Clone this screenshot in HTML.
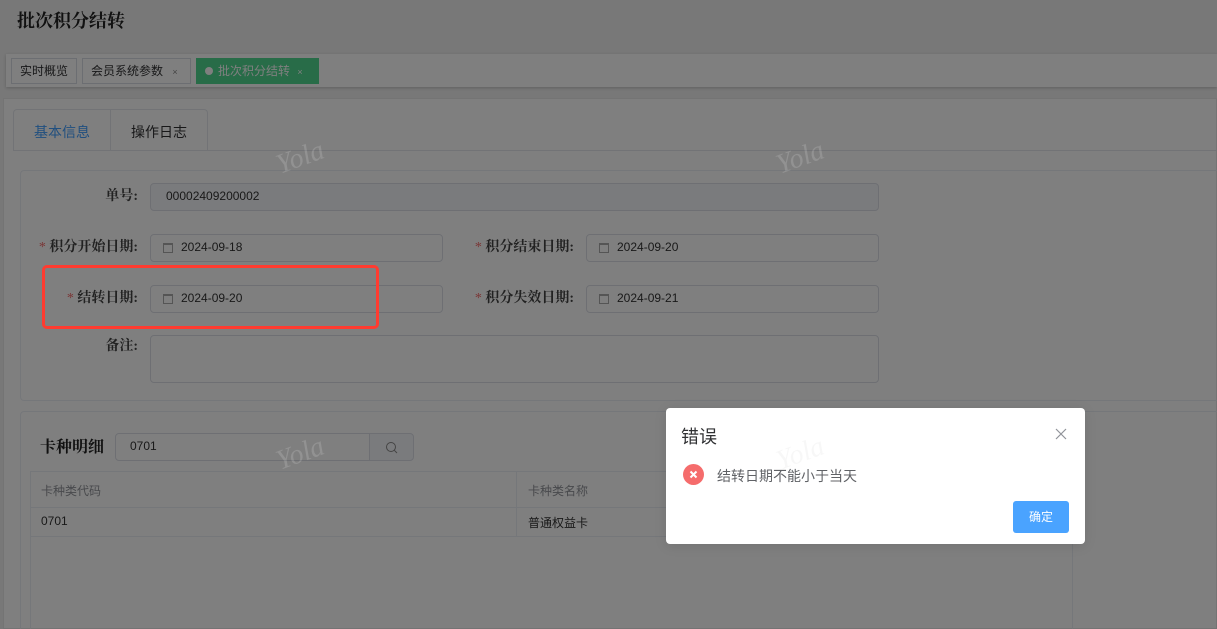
<!DOCTYPE html>
<html><head><meta charset="utf-8"><style>
*{box-sizing:border-box;margin:0;padding:0}
body{width:1217px;height:629px;overflow:hidden;position:relative;background:#fff;font-family:"Liberation Sans","Noto Sans CJK SC",sans-serif;color:#303133}
.a{position:absolute}
.inp{position:absolute;border:1px solid #dcdfe6;border-radius:4px;background:#fff;font-size:12px;color:#333;padding-left:30px;line-height:25px}
.cal{position:absolute;left:12px;top:8px;width:10px;height:10px;border:1px solid #aaa;border-top-width:2px}
.lbl{position:absolute;font-size:14px;font-weight:bold;color:#444;text-align:right;line-height:27px;font-family:"Liberation Serif","Noto Serif CJK SC",serif}
.lbl b{color:#f56c6c;font-weight:normal}
.wm{position:absolute;font-family:"Liberation Serif",serif;font-style:italic;font-size:28px;color:rgba(255,255,255,0.15);transform:rotate(-20deg);z-index:5}
</style></head><body>
<div class="a" style="left:0;top:0;width:1217px;height:629px;background:#f0f0f0"></div>
<div class="a" style="left:17px;top:7px;font-size:18px;font-weight:bold;color:#222;font-family:'Liberation Serif','Noto Serif CJK SC',serif">批次积分结转</div>
<div class="a" style="left:6px;top:54px;width:1211px;height:33px;background:#fff;box-shadow:0 1px 3px rgba(0,0,0,.2)"></div>
<div class="a" style="left:11px;top:58px;width:66px;height:26px;border:1px solid #d8dce5;font-size:12px;line-height:24px;text-align:center;background:#fff">实时概览</div>
<div class="a" style="left:82px;top:58px;width:109px;height:26px;border:1px solid #d8dce5;font-size:12px;line-height:24px;padding-left:8px;background:#fff">会员系统参数 <span style="font-size:9px;color:#888;margin-left:6px">×</span></div>
<div class="a" style="left:196px;top:58px;width:123px;height:26px;background:#50d890;color:#fff;font-size:12px;line-height:26px;padding-left:9px"><span style="display:inline-block;width:8px;height:8px;border-radius:50%;background:#fff;margin-right:5px"></span>批次积分结转 <span style="font-size:9px;margin-left:4px">×</span></div>
<div class="a" style="left:3px;top:98px;width:1214px;height:531px;background:#fff;border:1px solid #e8e8e8"></div>
<div class="a" style="left:13px;top:109px;width:195px;height:42px;border:1px solid #e4e7ed;border-bottom:none;border-radius:4px 4px 0 0;background:#fff"></div>
<div class="a" style="left:110px;top:109px;width:1px;height:41px;background:#e4e7ed"></div>
<div class="a" style="left:13px;top:150px;width:1204px;height:1px;background:#e4e7ed"></div>
<div class="a" style="left:34px;top:122px;font-size:14px;color:#409eff">基本信息</div>
<div class="a" style="left:131px;top:122px;font-size:14px;color:#303133">操作日志</div>
<div class="a" style="left:20px;top:170px;width:1197px;height:231px;border:1px solid #ebeef5;border-right:none;border-radius:4px 0 0 4px"></div>
<div class="lbl" style="left:40px;top:183px;width:98px">单号:</div>
<div class="inp" style="left:150px;top:183px;width:729px;height:28px;background:#f5f7fa;padding-left:15px">00002409200002</div>
<div class="lbl" style="left:20px;top:234px;width:118px"><b>*</b> 积分开始日期:</div>
<div class="inp" style="left:150px;top:234px;width:293px;height:28px"><i class="cal"></i>2024-09-18</div>
<div class="lbl" style="left:456px;top:234px;width:118px"><b>*</b> 积分结束日期:</div>
<div class="inp" style="left:586px;top:234px;width:293px;height:28px"><i class="cal"></i>2024-09-20</div>
<div class="lbl" style="left:40px;top:285px;width:98px"><b>*</b> 结转日期:</div>
<div class="inp" style="left:150px;top:285px;width:293px;height:28px"><i class="cal"></i>2024-09-20</div>
<div class="lbl" style="left:456px;top:285px;width:118px"><b>*</b> 积分失效日期:</div>
<div class="inp" style="left:586px;top:285px;width:293px;height:28px"><i class="cal"></i>2024-09-21</div>
<div class="lbl" style="left:40px;top:335px;width:98px;line-height:24px">备注:</div>
<div class="inp" style="left:150px;top:335px;width:729px;height:48px"></div>
<div class="a" style="left:20px;top:411px;width:1197px;height:218px;border:1px solid #ebeef5;border-right:none;border-bottom:none;border-radius:4px 0 0 0"></div>
<div class="a" style="left:40px;top:434px;font-size:16px;font-weight:bold;color:#222;font-family:'Liberation Serif','Noto Serif CJK SC',serif">卡种明细</div>
<div class="inp" style="left:115px;top:433px;width:255px;height:28px;padding-left:14px;border-radius:4px 0 0 4px">0701</div>
<div class="a" style="left:369px;top:433px;width:45px;height:28px;border:1px solid #dcdfe6;border-radius:0 4px 4px 0;background:#f5f7fa"><svg class="a" style="left:15px;top:7px" width="14" height="14"><circle cx="6" cy="6" r="4.5" fill="none" stroke="#888" stroke-width="1"/><path d="M9.3 9.3L12 12" stroke="#888" stroke-width="1"/></svg></div>
<div class="a" style="left:30px;top:471px;width:1043px;height:158px;border:1px solid #ebeef5;border-bottom:none"></div>
<div class="a" style="left:30px;top:507px;width:1043px;height:1px;background:#ebeef5"></div>
<div class="a" style="left:30px;top:536px;width:1043px;height:1px;background:#ebeef5"></div>
<div class="a" style="left:516px;top:471px;width:1px;height:65px;background:#ebeef5"></div>
<div class="a" style="left:41px;top:482px;font-size:12px;color:#909399">卡种类代码</div>
<div class="a" style="left:528px;top:482px;font-size:12px;color:#909399">卡种类名称</div>
<div class="a" style="left:41px;top:514px;font-size:12px;color:#333">0701</div>
<div class="a" style="left:528px;top:514px;font-size:12px;color:#333">普通权益卡</div>
<div class="a" style="left:0;top:0;width:1217px;height:629px;background:rgba(0,0,0,.5);z-index:4"></div>
<div class="wm" style="left:276px;top:142px">Yola</div>
<div class="wm" style="left:776px;top:142px">Yola</div>
<div class="wm" style="left:276px;top:438px">Yola</div>
<div class="a" style="left:42px;top:265px;width:337px;height:64px;border:3px solid #ff3b30;border-radius:5px;z-index:6"></div>
<div class="a" style="left:666px;top:408px;width:419px;height:136px;background:#fff;border-radius:4px;z-index:7;box-shadow:0 2px 12px rgba(0,0,0,.1)">
 <div class="a" style="left:15px;top:15px;font-size:18px;color:#303133">错误</div>
 <div class="a" style="left:388px;top:19px;width:14px;height:14px">
  <svg width="14" height="14"><path d="M2 2L12 12M12 2L2 12" stroke="#909399" stroke-width="1.2"/></svg></div>
 <div class="a" style="left:17px;top:56px;width:21px;height:21px;border-radius:50%;background:#f56c6c">
  <svg width="21" height="21"><path d="M7.5 7.5L13.5 13.5M13.5 7.5L7.5 13.5" stroke="#fff" stroke-width="2"/></svg></div>
 <div class="a" style="left:51px;top:58px;font-size:14px;color:#606266">结转日期不能小于当天</div>
 <div class="a" style="left:347px;top:93px;width:56px;height:32px;background:#4aa3ff;border-radius:3px;color:#fff;font-size:12px;line-height:32px;text-align:center">确定</div>
 <div class="wm" style="left:110px;top:30px;color:rgba(0,0,0,.03)">Yola</div>
</div>
</body></html>
